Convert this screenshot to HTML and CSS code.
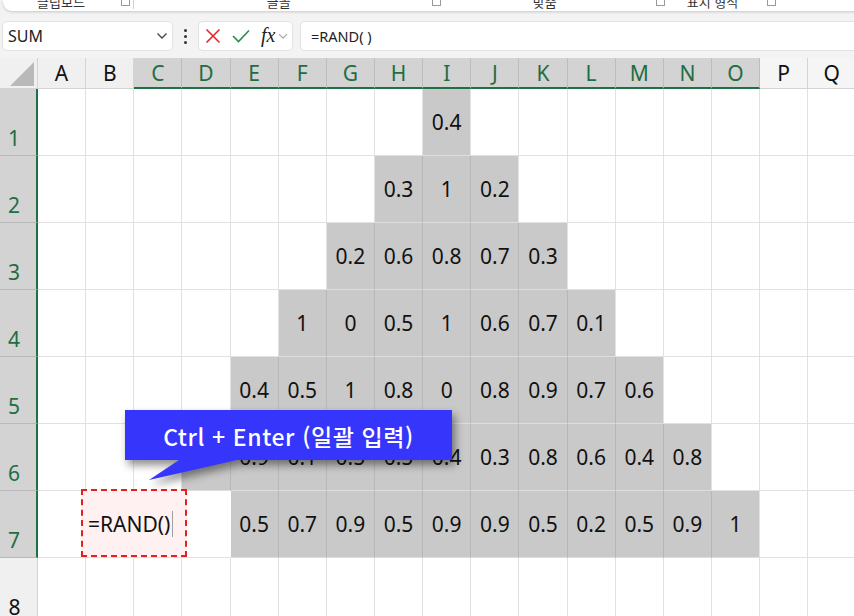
FILE: index.html
```html
<!DOCTYPE html>
<html lang="ko">
<head>
<meta charset="utf-8">
<link rel="stylesheet" href="styles.css">
</head>
<body>
<div class="app">
  <div class="ribbon">
    <div class="rib-labels">
      <span class="rl l1">클립보드</span>
      <span class="launch lc1"></span>
      <span class="rsep"></span>
      <span class="rl l2">글꼴</span>
      <span class="launch lc2"></span>
      <span class="rl l3">맞춤</span>
      <span class="launch lc3"></span>
      <span class="rl l4">표시 형식</span>
      <span class="launch lc4"></span>
    </div>
  </div>

  <div class="fbar">
    <div class="namebox">
      <span class="nb-text">SUM</span>
      <svg class="nb-chev" width="12" height="8" viewBox="0 0 12 8"><path d="M1.5 1.5 L6 6 L10.5 1.5" fill="none" stroke="#444" stroke-width="1.3"/></svg>
    </div>
    <div class="dots"><i></i><i></i><i></i></div>
    <div class="fxbox">
      <svg class="ic-x" width="16" height="16" viewBox="0 0 16 16"><path d="M1.5 1.5 L14.5 14.5 M14.5 1.5 L1.5 14.5" stroke="#e8242c" stroke-width="1.6" fill="none"/></svg>
      <svg class="ic-ok" width="18" height="14" viewBox="0 0 18 14"><path d="M1 7 L6.5 12.5 L17 1.5" stroke="#2c8a4e" stroke-width="1.6" fill="none"/></svg>
      <span class="fx">fx</span>
      <svg class="ic-chev" width="10" height="7" viewBox="0 0 10 7"><path d="M1 1.2 L5 5.2 L9 1.2" fill="none" stroke="#a8a8a8" stroke-width="1.2"/></svg>
    </div>
    <div class="formula">=RAND( )</div>
  </div>

  <div class="sheet">
    <div class="corner"><svg width="38" height="31" viewBox="0 0 38 31"><polygon points="34,4 34,28 10,28" fill="#b9b9b9"/></svg></div>
    <div class="ch">A</div><div class="ch">B</div><div class="ch s">C</div><div class="ch s">D</div><div class="ch s">E</div><div class="ch s">F</div><div class="ch s">G</div><div class="ch s">H</div><div class="ch s">I</div><div class="ch s">J</div><div class="ch s">K</div><div class="ch s">L</div><div class="ch s">M</div><div class="ch s">N</div><div class="ch s">O</div><div class="ch p">P</div><div class="ch p">Q</div>

    <div class="rh s">1</div>
    <div class="c"></div><div class="c"></div><div class="c"></div><div class="c"></div><div class="c"></div><div class="c"></div><div class="c"></div><div class="c"></div><div class="c g e">0.4</div><div class="c"></div><div class="c"></div><div class="c"></div><div class="c"></div><div class="c"></div><div class="c"></div><div class="c"></div><div class="c"></div>

    <div class="rh s">2</div>
    <div class="c"></div><div class="c"></div><div class="c"></div><div class="c"></div><div class="c"></div><div class="c"></div><div class="c"></div><div class="c g">0.3</div><div class="c g">1</div><div class="c g e">0.2</div><div class="c"></div><div class="c"></div><div class="c"></div><div class="c"></div><div class="c"></div><div class="c"></div><div class="c"></div>

    <div class="rh s">3</div>
    <div class="c"></div><div class="c"></div><div class="c"></div><div class="c"></div><div class="c"></div><div class="c"></div><div class="c g">0.2</div><div class="c g">0.6</div><div class="c g">0.8</div><div class="c g">0.7</div><div class="c g e">0.3</div><div class="c"></div><div class="c"></div><div class="c"></div><div class="c"></div><div class="c"></div><div class="c"></div>

    <div class="rh s">4</div>
    <div class="c"></div><div class="c"></div><div class="c"></div><div class="c"></div><div class="c"></div><div class="c g">1</div><div class="c g">0</div><div class="c g">0.5</div><div class="c g">1</div><div class="c g">0.6</div><div class="c g">0.7</div><div class="c g e">0.1</div><div class="c"></div><div class="c"></div><div class="c"></div><div class="c"></div><div class="c"></div>

    <div class="rh s">5</div>
    <div class="c"></div><div class="c"></div><div class="c"></div><div class="c"></div><div class="c g">0.4</div><div class="c g">0.5</div><div class="c g">1</div><div class="c g">0.8</div><div class="c g">0</div><div class="c g">0.8</div><div class="c g">0.9</div><div class="c g">0.7</div><div class="c g e">0.6</div><div class="c"></div><div class="c"></div><div class="c"></div><div class="c"></div>

    <div class="rh s">6</div>
    <div class="c"></div><div class="c"></div><div class="c"></div><div class="c g"></div><div class="c g">0.9</div><div class="c g">0.1</div><div class="c g">0.5</div><div class="c g">0.5</div><div class="c g">0.4</div><div class="c g">0.3</div><div class="c g">0.8</div><div class="c g">0.6</div><div class="c g">0.4</div><div class="c g e">0.8</div><div class="c"></div><div class="c"></div><div class="c"></div>

    <div class="rh s">7</div>
    <div class="c"></div><div class="c"></div><div class="c"></div><div class="c w"></div><div class="c g">0.5</div><div class="c g">0.7</div><div class="c g">0.9</div><div class="c g">0.5</div><div class="c g">0.9</div><div class="c g">0.9</div><div class="c g">0.5</div><div class="c g">0.2</div><div class="c g">0.5</div><div class="c g">0.9</div><div class="c g e">1</div><div class="c"></div><div class="c"></div>

    <div class="rh">8</div>
    <div class="c"></div><div class="c"></div><div class="c"></div><div class="c"></div><div class="c"></div><div class="c"></div><div class="c"></div><div class="c"></div><div class="c"></div><div class="c"></div><div class="c"></div><div class="c"></div><div class="c"></div><div class="c"></div><div class="c"></div><div class="c"></div><div class="c"></div>

    <div class="editbox"><span class="edit-text">=RAND()</span><span class="caret"></span></div>

    <div class="callout">
      <svg class="callout-shape" width="340" height="80" viewBox="0 0 340 80"><polygon points="0,0 327,0 327,50 112,50 24,70 54,50 0,50" fill="#3535fb"/></svg>
      <div class="callout-text">Ctrl + Enter (일괄 입력)</div>
    </div>
  </div>
</div>
</body>
</html>
```

FILE: styles.css
```css
* { box-sizing: border-box; }
html, body { margin: 0; padding: 0; }
body {
  width: 854px;
  height: 616px;
  overflow: hidden;
  background: #f3f3f3;
  font-family: "Noto Sans", "Open Sans", "Noto Sans CJK KR", sans-serif;
  color: #111;
}
.app { width: 854px; height: 616px; overflow: hidden; }

/* ribbon remnant */
.ribbon {
  height: 11px;
  margin-left: 3px;
  margin-right: -20px;
  background: #fff;
  border-radius: 0 0 9px 9px;
  box-shadow: 0 1px 3px rgba(0,0,0,0.18);
  overflow: hidden;
}
.rib-labels {
  display: flex;
  align-items: center;
  height: 16px;
  margin-top: -7px;
  font-family: "Noto Sans CJK KR", sans-serif;
  font-size: 13px;
  color: #333;
  white-space: nowrap;
}
.rl { flex: none; }
.l1 { margin-left: 34px; }
.launch {
  flex: none;
  width: 9px; height: 9px;
  border: 1px solid #9a9a9a;
}
.lc1 { margin-left: 36px; }
.rsep { flex: none; width: 1px; height: 16px; background: #d0d0d0; margin-left: 3px; }
.l2 { margin-left: 133px; }
.lc2 { margin-left: 141px; }
.l3 { margin-left: 92px; }
.lc3 { margin-left: 99px; }
.l4 { margin-left: 22px; }
.lc4 { margin-left: 29px; }

/* formula bar */
.fbar {
  display: flex;
  align-items: stretch;
  height: 30px;
  margin-top: 10px;
  margin-left: 2px;
}
.namebox {
  flex: none;
  width: 171px;
  background: #fff;
  border: 1px solid #e2e2e2;
  border-radius: 5px;
  display: flex;
  align-items: center;
  justify-content: space-between;
  padding: 0 4px 0 5px;
}
.nb-text { font-size: 16px; color: #222; }
.dots {
  flex: none;
  width: 25px;
  display: flex;
  flex-direction: column;
  align-items: center;
  justify-content: center;
  gap: 3px;
}
.dots i { display: block; width: 3px; height: 3px; background: #333; border-radius: 50%; }
.fxbox {
  flex: none;
  width: 95px;
  background: #fff;
  border: 1px solid #e2e2e2;
  border-radius: 5px;
  display: flex;
  align-items: center;
  padding-left: 6px;
}
.ic-x { flex: none; }
.ic-ok { flex: none; margin-left: 11px; }
.fx {
  flex: none;
  margin-left: 11px;
  font-family: "Liberation Serif", serif;
  font-style: italic;
  font-size: 20px;
  line-height: 1;
  color: #222;
  margin-top: -3px;
}
.ic-chev { flex: none; margin-left: 3px; }
.formula {
  flex: 1;
  margin-left: 7px;
  margin-right: -10px;
  background: #fff;
  border: 1px solid #e2e2e2;
  border-radius: 5px;
  display: flex;
  align-items: center;
  padding-left: 10px;
  font-size: 14.5px;
  color: #222;
}

/* sheet grid */
.sheet {
  position: relative;
  margin-top: 7px;
  display: grid;
  grid-template-columns: 38px repeat(17, 48.15px);
  grid-template-rows: 31px repeat(8, 67px);
  background: #fff;
  font-size: 21px;
}
.corner { background: #f0f0f0; border-right: 1px solid #d4d4d4; border-bottom: 1px solid #d4d4d4; }
.corner svg { display: block; }
.ch {
  background: #f0f0f0;
  border-right: 1px solid #d4d4d4;
  border-bottom: 1px solid #d4d4d4;
  display: flex;
  align-items: center;
  justify-content: center;
  color: #111;
}
.ch.s { background: #d3d3d3; color: #1e6e42; border-right-color: #bdbdbd; border-bottom: 2px solid #1e7145; }
.ch.p { background: #f5f5f5; }
.rh {
  background: #f0f0f0;
  border-right: 1px solid #d4d4d4;
  border-bottom: 1px solid #c9c9c9;
  display: flex;
  align-items: flex-end;
  justify-content: center;
  padding-right: 8px;
  padding-bottom: 3px;
  color: #111;
}
.rh.s { background: #d3d3d3; color: #1e6e42; border-right: 2px solid #1e7145; border-bottom-color: #b9b9b9; }
.c {
  border-right: 1px solid #e1e1e1;
  border-bottom: 1px solid #e1e1e1;
  display: flex;
  align-items: center;
  justify-content: center;
  color: #111;
}
.c.g { background: #c9c9c9; border-right-color: #b7b7b7; border-bottom-color: #dedede; }
.c.g.e { border-right-color: #e3e3e3; }
.c.w { border-right-color: #fff; }

/* edit box */
.editbox {
  position: absolute;
  left: 81px;
  top: 431px;
  width: 106px;
  height: 68px;
  border: 2px dashed #e61e1e;
  background: #fff1f1;
  display: flex;
  align-items: center;
  padding-left: 5px;
  padding-top: 1px;
}
.edit-text { font-size: 21px; color: #111; }
.caret { display: block; width: 1px; height: 26px; background: #a0a0a0; margin-left: 2px; }

/* callout */
.callout {
  position: absolute;
  left: 125px;
  top: 352px;
  width: 340px;
  height: 80px;
}
.callout-shape {
  display: block;
  filter: drop-shadow(3px 5px 4px rgba(0,0,0,0.45));
}
.callout-text {
  position: absolute;
  left: 0;
  top: 0;
  width: 327px;
  height: 50px;
  display: flex;
  align-items: center;
  justify-content: center;
  padding-top: 1px;
  font-family: "Noto Sans CJK KR", sans-serif;
  font-weight: 500;
  font-size: 23px;
  letter-spacing: 0.6px;
  color: #fff;
  white-space: nowrap;
}
```
